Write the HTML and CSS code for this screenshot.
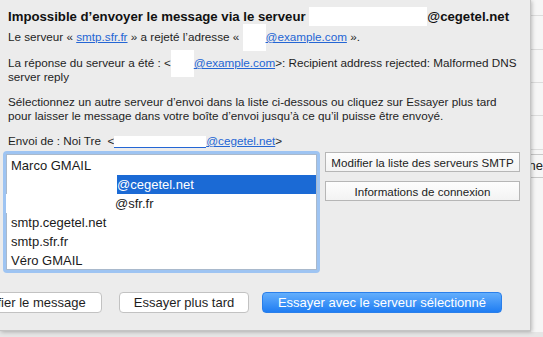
FILE: index.html
```html
<!DOCTYPE html>
<html lang="fr">
<head>
<meta charset="utf-8">
<link rel="stylesheet" href="styles.css">
</head>
<body>
<div class="screen">
  <div class="dialog">
    <div class="title">Impossible d’envoyer le message via le serveur <span class="redact r-title">&#8203;</span>@cegetel.net</div>
    <p class="line l1">Le serveur « <a class="link">smtp.sfr.fr</a> » a rejeté l’adresse « <span class="redact r-a">&#8203;</span><a class="link">@example.com</a> ».</p>
    <p class="line l2">La réponse du serveur a été : &lt;<span class="redact r-b">&#8203;</span><a class="link">@example.com</a>&gt;: Recipient address rejected: Malformed DNS<br>server reply</p>
    <p class="line l3">Sélectionnez un autre serveur d’envoi dans la liste ci-dessous ou cliquez sur Essayer plus tard<br>pour laisser le message dans votre boîte d’envoi jusqu’à ce qu’il puisse être envoyé.</p>
    <p class="line l4">Envoi de : Noi Tre&nbsp; &lt;<a class="link"><span class="r-c"></span>@cegetel.net</a>&gt;</p>
    <div class="middle">
      <div class="listring">
        <ul class="list">
          <li class="row">Marco GMAIL</li>
          <li class="row selected"><span class="redact r-row">&#8203;</span>@cegetel.net</li>
          <li class="row"><span class="redact r-row2">&#8203;</span>@sfr.fr</li>
          <li class="row">smtp.cegetel.net</li>
          <li class="row">smtp.sfr.fr</li>
          <li class="row">Véro GMAIL</li>
        </ul>
      </div>
      <div class="side-buttons">
        <button class="sq-btn">Modifier la liste des serveurs SMTP</button>
        <button class="sq-btn">Informations de connexion</button>
      </div>
    </div>
    <div class="actions">
      <button class="btn btn-edit">Modifier le message</button>
      <button class="btn btn-later">Essayer plus tard</button>
      <button class="btn btn-primary">Essayer avec le serveur sélectionné</button>
    </div>
  </div>
  <div class="behind">
    <div class="bl bl1"></div>
    <div class="bl bl2"></div>
    <div class="bl bl3"></div>
    <div class="bl bl4"></div>
    <div class="bl bl5"></div>
    <div class="bl-cell">ne</div>
  </div>
</div>
</body>
</html>
```

FILE: styles.css
```css
* { box-sizing: border-box; }
html, body {
  margin: 0;
  padding: 0;
  width: 543px;
  height: 337px;
  overflow: hidden;
  background: #dcdcdc;
  font-family: "Liberation Sans", Arial, sans-serif;
  color: #1e1e1e;
}
.screen {
  display: flex;
  width: 543px;
  height: 337px;
  background: linear-gradient(#cfcfcf, #e6e6e6 4px);
  background-color: #e4e4e4;
}
.dialog {
  width: 536px;
  height: 331px;
  background: #ececec;
  border-right: 1px solid #c4c4c4;
  border-bottom: 1px solid #c4c4c4;
  box-shadow: 1px 1px 4px rgba(0,0,0,0.25);
  position: relative;
  z-index: 1;
  display: flex;
  flex-direction: column;
  overflow: hidden;
}
.title {
  font-weight: bold;
  font-size: 13.2px;
  line-height: 18px;
  margin: 8px 0 0 8px;
  white-space: nowrap;
  color: #111;
}
.redact {
  background: #fff;
}
.r-title { padding: 2px 59px 2px 59px; }
.r-a { padding: 6px 11px 8px 12px; }
.r-b { padding: 6px 11px 8px 12px; }
.r-c {
  display: inline-block;
  width: 92px;
  height: 12px;
  vertical-align: -3px;
  background: #fff;
  border-bottom: 1px solid #2466d4;
}
.line {
  margin: 0 0 0 8px;
  font-size: 11.7px;
  line-height: 14px;
  white-space: nowrap;
}
.l1 { margin-top: 4px; }
.l2 { margin-top: 12px; }
.l3 { margin-top: 11px; }
.l4 { margin-top: 11px; }
.link {
  color: #2466d4;
  text-decoration: underline;
}
.middle {
  display: flex;
  align-items: flex-start;
  margin-top: 3px;
}
.listring {
  margin-left: 3px;
  padding: 3px;
  border-radius: 4px;
  background: #9ec4f2;
}
.list {
  margin: 0;
  padding: 1px 0 0 0;
  list-style: none;
  width: 311px;
  height: 116px;
  background: #fff;
  border: 1px solid #a9b9cc;
}
.row {
  height: 19px;
  line-height: 19px;
  font-size: 13px;
  padding-left: 4px;
  color: #1a1a1a;
  white-space: nowrap;
}
.row.selected {
  background: #1b6ad5;
  color: #fff;
}
.r-row { display: inline-block; width: 110px; height: 19px; vertical-align: top; margin-left: -4px; }
.r-row2 { display: inline-block; width: 109px; height: 19px; vertical-align: top; margin-left: -5px; }
.side-buttons {
  display: flex;
  flex-direction: column;
  gap: 9px;
  margin-left: 5px;
  margin-top: 1px;
}
.sq-btn {
  width: 195px;
  height: 20px;
  padding: 0;
  border: 1px solid #b6b6b6;
  background: linear-gradient(#fdfdfd, #f3f3f3);
  font-family: "Liberation Sans", Arial, sans-serif;
  font-size: 11.6px;
  color: #222;
  border-radius: 0;
}
.actions {
  display: flex;
  gap: 13px;
  margin-top: 19px;
  margin-left: -47px;
}
.btn {
  height: 21px;
  padding: 0;
  border-radius: 4px;
  font-family: "Liberation Sans", Arial, sans-serif;
  font-size: 13px;
}
.btn-edit, .btn-later {
  background: #fff;
  border: 1px solid #c2c2c2;
  color: #1e1e1e;
}
.btn-edit { width: 149px; margin-right: 4px; }
.btn-later { width: 130px; }
.btn-primary {
  width: 240px;
  border: 1px solid #2a7fea;
  background: linear-gradient(#63aefc, #1f7df3);
  color: #fff;
}
.behind {
  flex: 1;
  background: #f6f6f6;
  display: flex;
  flex-direction: column;
  height: 332px;
}
.bl { border-bottom: 1px solid #dcdcdc; }
.bl1 { height: 16px; }
.bl2 { height: 34px; }
.bl3 { height: 33px; }
.bl4 { height: 33px; }
.bl5 { height: 34px; }
.bl-cell {
  margin-top: 4px;
  height: 24px;
  border-top: 1px solid #c8c8c8;
  border-bottom: 1px solid #c8c8c8;
  font-size: 13px;
  line-height: 22px;
  margin-left: -2px;
  color: #222;
}
```
